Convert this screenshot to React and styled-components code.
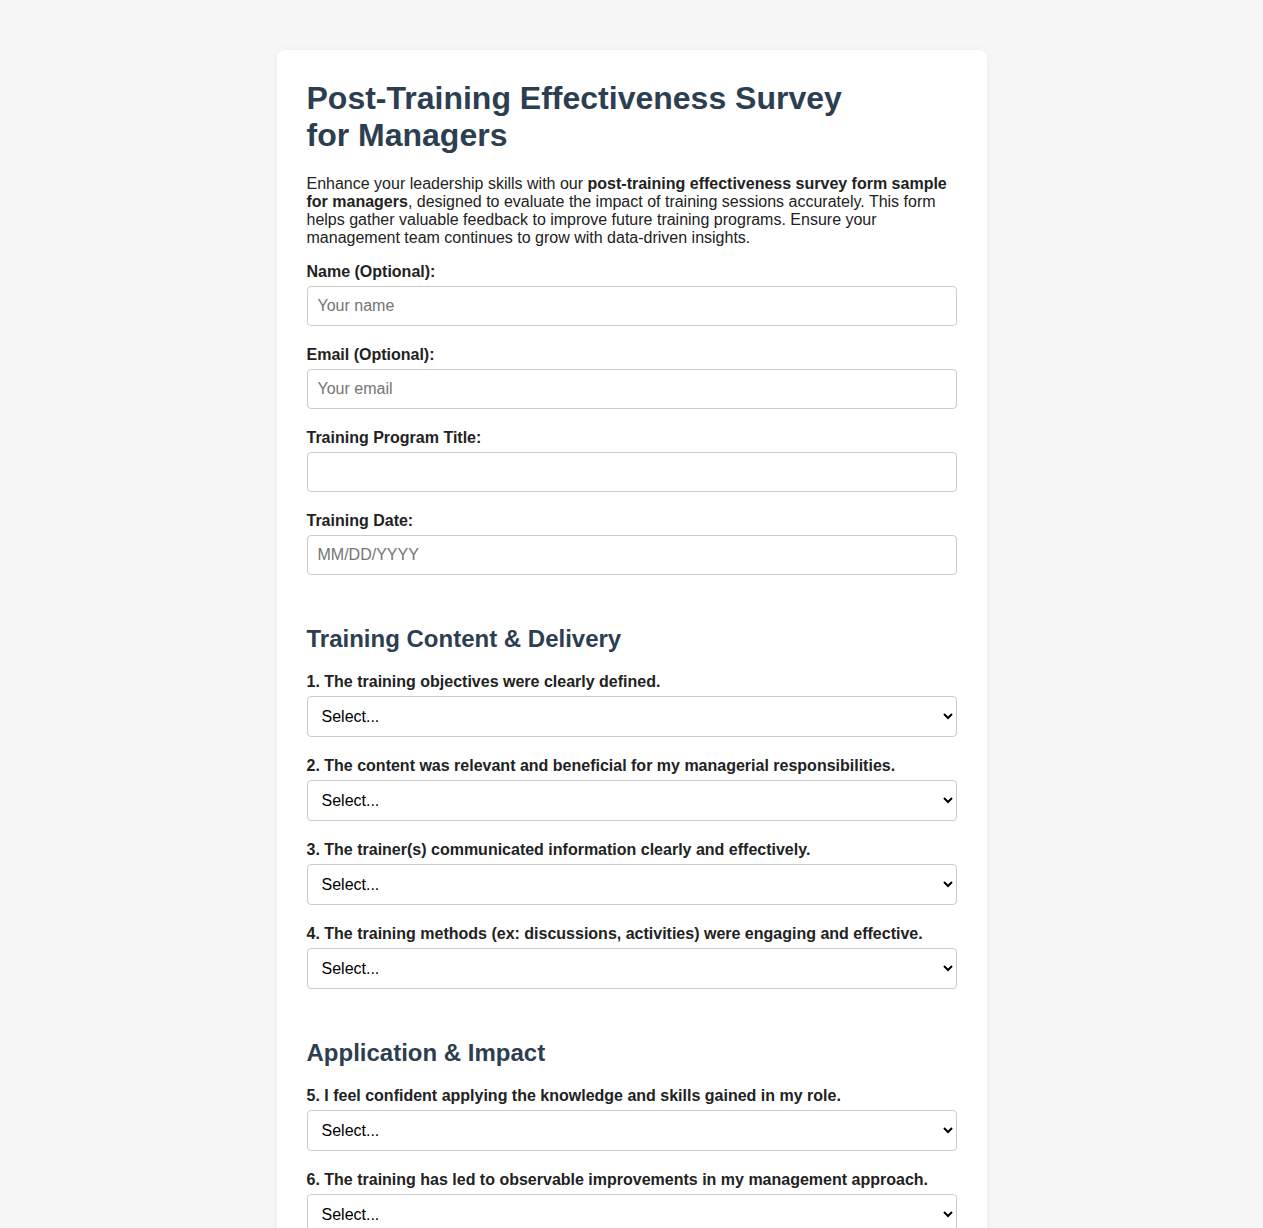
import styled, { createGlobalStyle } from "styled-components"

const GlobalStyle = createGlobalStyle`
	body {
		margin: 0;
		background-color: #f7f7f7;
		font-family: "Liberation Sans", Arial, sans-serif;
		color: #222;
	}
`

const Page = styled.div`
	padding: 50px 20px;
`

const Card = styled.form`
	max-width: 650px;
	margin: 0 auto;
	padding: 30px;
	background-color: #fff;
	border-radius: 8px;
	box-shadow: 0 0 10px rgba(0, 0, 0, 0.05);
`

const Title = styled.h1`
	margin: 0 0 21px;
	font-size: 32px;
	line-height: 37px;
	color: #2c3e50;
`

const Intro = styled.p`
	margin: 0 0 16px;
	font-size: 16px;
	line-height: 18px;
	color: #222;
`

const SectionTitle = styled.h2`
	margin: 50px 0 20px;
	font-size: 24px;
	line-height: 28px;
	color: #2c3e50;
`

const Group = styled.div`
	display: flex;
	flex-direction: column;
	margin-bottom: 20px;
`

const Label = styled.label`
	font-size: 16px;
	font-weight: bold;
	line-height: 18px;
	margin-bottom: 5px;
	color: #222;
`

const TextInput = styled.input`
	box-sizing: border-box;
	width: 100%;
	height: 40px;
	padding: 10px;
	font-family: inherit;
	font-size: 16px;
	border: 1px solid #ccc;
	border-radius: 4px;
	&::placeholder {
		color: #757575;
	}
`

const Select = styled.select`
	box-sizing: border-box;
	width: 100%;
	height: 41px;
	padding: 10px;
	font-family: inherit;
	font-size: 16px;
	color: #000;
	background-color: #fff;
	border: 1px solid #ccc;
	border-radius: 4px;
`

const fields = [
	{ id: "name", label: "Name (Optional):", placeholder: "Your name" },
	{ id: "email", label: "Email (Optional):", placeholder: "Your email" },
	{ id: "title", label: "Training Program Title:", placeholder: "" },
	{ id: "date", label: "Training Date:", placeholder: "MM/DD/YYYY" },
]

const sections = [
	{
		title: "Training Content & Delivery",
		questions: [
			"1. The training objectives were clearly defined.",
			"2. The content was relevant and beneficial for my managerial responsibilities.",
			"3. The trainer(s) communicated information clearly and effectively.",
			"4. The training methods (ex: discussions, activities) were engaging and effective.",
		],
	},
	{
		title: "Application & Impact",
		questions: [
			"5. I feel confident applying the knowledge and skills gained in my role.",
			"6. The training has led to observable improvements in my management approach.",
		],
	},
]

const App = () => {
	return (
		<Page>
			<GlobalStyle />
			<Card>
				<Title>
					Post-Training Effectiveness Survey
					<br />
					for Managers
				</Title>
				<Intro>
					Enhance your leadership skills with our <strong>post-training effectiveness survey form sample for managers</strong>, designed to evaluate the impact of training sessions accurately. This form helps gather valuable feedback to improve future training programs. Ensure your management team continues to grow with data-driven insights.
				</Intro>
				{fields.map((f) => (
					<Group key={f.id}>
						<Label htmlFor={f.id}>{f.label}</Label>
						<TextInput type="text" id={f.id} placeholder={f.placeholder} />
					</Group>
				))}
				{sections.map((s, si) => (
					<div key={si}>
						<SectionTitle>{s.title}</SectionTitle>
						{s.questions.map((q, qi) => (
							<Group key={qi}>
								<Label htmlFor={`q-${si}-${qi}`}>{q}</Label>
								<Select id={`q-${si}-${qi}`} defaultValue="">
									<option value="">Select...</option>
									<option>Strongly Agree</option>
									<option>Agree</option>
									<option>Neutral</option>
									<option>Disagree</option>
									<option>Strongly Disagree</option>
								</Select>
							</Group>
						))}
					</div>
				))}
			</Card>
		</Page>
	)
}

export default App
